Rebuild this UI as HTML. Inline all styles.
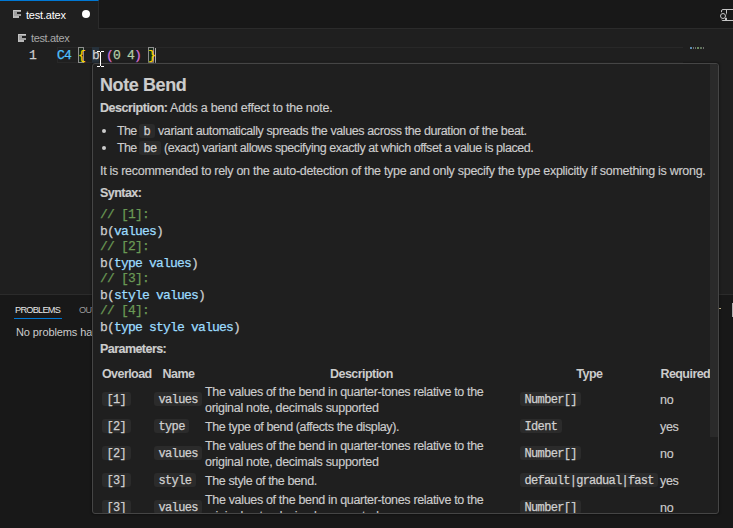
<!DOCTYPE html><html><head><meta charset="utf-8"><style>
*{box-sizing:border-box;margin:0;padding:0}
html,body{width:733px;height:528px;overflow:hidden;background:#1f1f1f;font-family:"Liberation Sans",sans-serif;color:#cccccc}
div{position:absolute;white-space:nowrap}
.t{font-size:12.5px;line-height:16px;letter-spacing:-0.3px}
.b{font-size:12.5px;line-height:16px;letter-spacing:-0.55px;font-weight:bold}
.ttl{font-size:18px;line-height:20px;letter-spacing:-0.4px;font-weight:bold}
.cb{font-family:"Liberation Mono",monospace;font-size:13px;letter-spacing:-0.8px;line-height:16px;white-space:pre;color:#cccccc}
.pill{font-family:"Liberation Mono",monospace;font-size:12px;letter-spacing:-0.65px;line-height:14px;height:14px;padding:0 4.5px;border-radius:3px;background:#2b2b2b;color:#d0d0d0}
.pill span{position:relative;top:1px}
.cm{color:#6a9955}
.id{color:#9cdcfe}
b{font-weight:bold;letter-spacing:-0.55px}
.cb,.pill span{-webkit-text-stroke:0.25px currentColor}
.t,.ttl{-webkit-text-stroke:0.15px currentColor}
</style></head><body>
<div style="left:0;top:0;width:733px;height:29px;background:#181818;border-bottom:1px solid #2b2b2b"></div>
<div style="left:0;top:0;width:99px;height:29px;background:#1f1f1f;border-top:1px solid #0078d4;border-right:1px solid #2b2b2b"></div>
<svg style="position:absolute;left:13px;top:10px" width="8" height="8" shape-rendering="crispEdges"><rect x="0" y="0" width="8" height="2" fill="#c8c8c8"/><rect x="0" y="0" width="1" height="8" fill="#c0c0c0"/><rect x="1" y="1" width="7" height="6" fill="#a0a0a0"/><rect x="1" y="6" width="5" height="2" fill="#b8b8b8"/><rect x="6" y="6" width="2" height="2" fill="#1f1f1f"/><rect x="4" y="2" width="4" height="2" fill="#1f1f1f"/></svg>
<div style="left:26px;top:7px;font-size:11px;line-height:16px;letter-spacing:-0.2px;color:#ffffff">test.atex</div>
<div style="left:82px;top:10px;width:8px;height:8px;border-radius:50%;background:#ffffff"></div>
<div style="left:721px;top:9px;width:15px;height:12px;border:1px solid #c5c5c5;border-radius:2px"></div>
<div style="left:726px;top:9px;width:1px;height:12px;background:#c5c5c5"></div>
<div style="left:719px;top:12px;width:8px;height:8px;border-radius:50%;background:#181818"></div>
<div style="left:720px;top:13px;width:6px;height:6px;border:1px solid #c5c5c5;border-radius:50%"></div>
<div style="left:725px;top:18px;width:2px;height:2px;background:#c5c5c5"></div>
<svg style="position:absolute;left:18px;top:34px" width="8" height="8" shape-rendering="crispEdges"><rect x="0" y="0" width="8" height="2" fill="#c8c8c8"/><rect x="0" y="0" width="1" height="8" fill="#c0c0c0"/><rect x="1" y="1" width="7" height="6" fill="#a0a0a0"/><rect x="1" y="6" width="5" height="2" fill="#b8b8b8"/><rect x="6" y="6" width="2" height="2" fill="#1f1f1f"/><rect x="4" y="2" width="4" height="2" fill="#1f1f1f"/></svg>
<div style="left:31px;top:30px;font-size:11px;line-height:16px;letter-spacing:-0.35px;color:#a9a9a9">test.atex</div>
<div style="left:57px;top:47px;width:626px;height:16px;border:1px solid #282828;border-right:0"></div>
<div style="left:690px;top:47px;width:2px;height:2px;background:#5d8cb0"></div>
<div style="left:693px;top:47px;width:1px;height:2px;background:#6e6e6e"></div>
<div style="left:695px;top:47px;width:1px;height:2px;background:#6e6e6e"></div>
<div style="left:697px;top:47px;width:2px;height:2px;background:#6a8a60"></div>
<div style="left:700px;top:47px;width:2px;height:2px;background:#5f705a"></div>
<div style="left:703px;top:47px;width:1px;height:2px;background:#6e6e6e"></div>
<div style="left:78px;top:47px;width:6px;height:16px;border:1px solid #8c8c8c;background:#1b2a1b"></div>
<div style="left:148px;top:47px;width:6px;height:16px;border:1px solid #8c8c8c;background:#1b2a1b"></div>
<div style="left:92px;top:47px;width:7px;height:16px;background:#26313b"></div>
<div class="cb" style="left:29px;top:48px;color:#cccccc">1</div>
<div class="cb" style="left:57px;top:48px"><span style="color:#4fc1ff">C4</span> <span style="color:#ffd700">{</span> b <span style="color:#da70d6">(</span><span style="color:#b5cea8">0 4</span><span style="color:#da70d6">)</span> <span style="color:#ffd700">}</span></div>
<div style="left:155px;top:48px;width:1px;height:15px;background:#aeafad"></div>
<div style="left:0;top:294px;width:733px;height:234px;background:#181818;border-top:1px solid #2b2b2b"></div>
<div style="left:15px;top:304px;font-size:9.2px;line-height:12px;letter-spacing:-0.75px;color:#e7e7e7">PROBLEMS</div>
<div style="left:14px;top:318px;width:48px;height:1px;background:#0078d4"></div>
<div style="left:79px;top:304px;font-size:9.2px;line-height:12px;letter-spacing:-0.75px;color:#9d9d9d">OUTPUT</div>
<div style="left:16px;top:325px;font-size:11px;line-height:14px;letter-spacing:-0.1px">No problems have been detected in the workspace.</div>
<div style="left:732px;top:303px;width:1px;height:14px;background:#b0b0b0"></div>
<div style="left:719px;top:308px;width:2px;height:1px;background:#d0c090"></div>
<div style="left:92px;top:63px;width:627px;height:451px;background:#1f1f1f;border:1px solid #454545;border-radius:3px;overflow:hidden;box-shadow:0 0 2px 1px rgba(0,0,0,0.3)">
<div class="ttl" style="left:7px;top:11px;">Note Bend</div>
<div class="t" style="left:7px;top:36px;letter-spacing:-0.25px"><b style="letter-spacing:-0.45px">Description:</b> Adds a bend effect to the note.</div>
<div style="left:9px;top:65px;width:4px;height:4px;border-radius:50%;background:#cccccc"></div>
<div style="left:9px;top:82px;width:4px;height:4px;border-radius:50%;background:#cccccc"></div>
<div class="t" style="left:24px;top:59px;letter-spacing:-0.7px">The</div>
<div class="pill" style="left:46px;top:60px;"><span>b</span></div>
<div class="t" style="left:65px;top:59px;letter-spacing:-0.404px">variant automatically spreads the values across the duration of the beat.</div>
<div class="t" style="left:24px;top:76px;letter-spacing:-0.7px">The</div>
<div class="pill" style="left:46px;top:77px;"><span>be</span></div>
<div class="t" style="left:71px;top:76px;letter-spacing:-0.43px">(exact) variant allows specifying exactly at which offset a value is placed.</div>
<div class="t" style="left:7px;top:99px;letter-spacing:-0.283px">It is recommended to rely on the auto-detection of the type and only specify the type explicitly if something is wrong.</div>
<div class="t" style="left:7px;top:121px;"><b>Syntax:</b></div>
<div class="cb" style="left:7px;top:143px;"><span class="cm">// [1]:</span></div>
<div class="cb" style="left:7px;top:160px;">b(<span class="id">values</span>)</div>
<div class="cb" style="left:7px;top:175px;"><span class="cm">// [2]:</span></div>
<div class="cb" style="left:7px;top:192px;">b(<span class="id">type values</span>)</div>
<div class="cb" style="left:7px;top:207px;"><span class="cm">// [3]:</span></div>
<div class="cb" style="left:7px;top:224px;">b(<span class="id">style values</span>)</div>
<div class="cb" style="left:7px;top:239px;"><span class="cm">// [4]:</span></div>
<div class="cb" style="left:7px;top:256px;">b(<span class="id">type style values</span>)</div>
<div class="t" style="left:7px;top:277px;"><b>Parameters:</b></div>
<div class="b" style="left:-26.200000000000003px;top:302px;width:120px;text-align:center">Overload</div>
<div class="b" style="left:25.5px;top:302px;width:120px;text-align:center">Name</div>
<div class="b" style="left:208.39999999999998px;top:302px;width:120px;text-align:center">Description</div>
<div class="b" style="left:436.4px;top:302px;width:120px;text-align:center">Type</div>
<div class="b" style="left:532.3px;top:302px;width:120px;text-align:center">Required</div>
<div class="pill" style="left:9px;top:328px;"><span>[1]</span></div>
<div class="pill" style="left:61px;top:328px;"><span>values</span></div>
<div class="pill" style="left:427px;top:328px;"><span>Number[]</span></div>
<div class="t" style="left:112px;top:320px;letter-spacing:-0.332px">The values of the bend in quarter-tones relative to the</div>
<div class="t" style="left:112px;top:336px;">original note, decimals supported</div>
<div class="t" style="left:567px;top:328px;">no</div>
<div class="pill" style="left:9px;top:355px;"><span>[2]</span></div>
<div class="pill" style="left:61px;top:355px;"><span>type</span></div>
<div class="pill" style="left:427px;top:355px;"><span>Ident</span></div>
<div class="t" style="left:112px;top:355px;letter-spacing:-0.38px">The type of bend (affects the display).</div>
<div class="t" style="left:567px;top:355px;">yes</div>
<div class="pill" style="left:9px;top:382px;"><span>[2]</span></div>
<div class="pill" style="left:61px;top:382px;"><span>values</span></div>
<div class="pill" style="left:427px;top:382px;"><span>Number[]</span></div>
<div class="t" style="left:112px;top:374px;letter-spacing:-0.332px">The values of the bend in quarter-tones relative to the</div>
<div class="t" style="left:112px;top:390px;">original note, decimals supported</div>
<div class="t" style="left:567px;top:382px;">no</div>
<div class="pill" style="left:9px;top:409px;"><span>[3]</span></div>
<div class="pill" style="left:61px;top:409px;"><span>style</span></div>
<div class="pill" style="left:427px;top:409px;letter-spacing:-0.74px"><span>default|gradual|fast</span></div>
<div class="t" style="left:112px;top:409px;letter-spacing:-0.38px">The style of the bend.</div>
<div class="t" style="left:567px;top:409px;">yes</div>
<div class="pill" style="left:9px;top:436px;"><span>[3]</span></div>
<div class="pill" style="left:61px;top:436px;"><span>values</span></div>
<div class="pill" style="left:427px;top:436px;"><span>Number[]</span></div>
<div class="t" style="left:112px;top:428px;letter-spacing:-0.332px">The values of the bend in quarter-tones relative to the</div>
<div class="t" style="left:112px;top:444px;">original note, decimals supported</div>
<div class="t" style="left:567px;top:436px;">no</div>
<div style="left:617px;top:0;width:8px;height:373px;background:#2a2a2a"></div>
</div>
<div style="left:97px;top:51px;width:3px;height:1px;background:#fff"></div>
<div style="left:101px;top:51px;width:3px;height:1px;background:#fff"></div>
<div style="left:97px;top:66px;width:3px;height:1px;background:#fff"></div>
<div style="left:101px;top:66px;width:3px;height:1px;background:#fff"></div>
<div style="left:100px;top:52px;width:1px;height:14px;background:#fff"></div>
</body></html>
